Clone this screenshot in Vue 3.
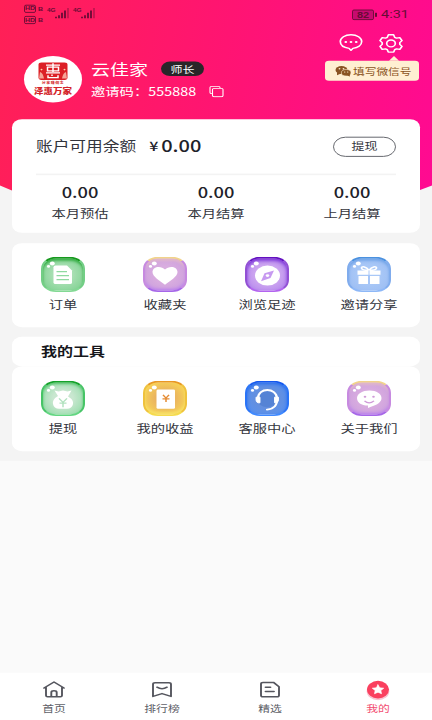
<script setup>
const stats = [
  { value: '0.00', label: '本月预估' },
  { value: '0.00', label: '本月结算' },
  { value: '0.00', label: '上月结算' },
]
const shortcuts = [
  { label: '订单', icon: 'order', tone: 'green' },
  { label: '收藏夹', icon: 'heart', tone: 'orchid' },
  { label: '浏览足迹', icon: 'compass', tone: 'violet' },
  { label: '邀请分享', icon: 'gift', tone: 'sky' },
]
const tools = [
  { label: '提现', icon: 'bag', tone: 'mint' },
  { label: '我的收益', icon: 'income', tone: 'amber' },
  { label: '客服中心', icon: 'headset', tone: 'blue' },
  { label: '关于我们', icon: 'smile', tone: 'orchid' },
]
const groups = [shortcuts, tools]
const tabs = [
  { label: '首页', icon: 'home' },
  { label: '排行榜', icon: 'rank' },
  { label: '精选', icon: 'pick' },
  { label: '我的', icon: 'mine', active: true },
]
</script>

<template>
  <div class="viewport">
    <div class="phone">
      <main class="page">
        <div class="hero"></div>
        <header class="status">
          <div class="hd"><span><b>HD</b><i>B</i></span><span><b>HD</b><i>B</i></span></div>
          <div v-for="n in 2" :key="n" class="signal">
            <em>4G</em>
            <svg width="14" height="13" viewBox="0 0 14 13"><path d="M1 11v2M4 9v4M7 6v7M10 3v10" /><path class="dim" d="M13 0v13" /></svg>
          </div>
          <div class="battery"><span>82</span></div>
          <time>4:31</time>
        </header>

        <section class="profile">
          <div class="avatar">
            <svg width="58" height="58" viewBox="0 0 58 58">
              <rect x="14.500" y="8" width="29" height="22" rx="3" fill="#dc2026" />
              <path d="M16 20q3 1 4 8h-5zM42 20q-3 1-4 8h5z" fill="#f5a497" />
              <circle cx="17.500" cy="17" r="1" fill="#ffd4a8" /><circle cx="40.500" cy="17" r="1" fill="#ffd4a8" />
              <path d="M22 11.500h14M29 9v11M23.500 14h11v4.500h-11zM22 21h14M24 24v3h10v-3M28 23v2" fill="none" stroke="#fff" stroke-width="1.500" />
            </svg>
            <small>分享赚佣金</small>
            <strong>泽惠万家</strong>
          </div>
          <div class="who">
            <div class="name">云佳家<span class="badge">师长</span></div>
            <div class="code">
              邀请码：<span>555888</span>
              <svg width="15" height="15" viewBox="0 0 15 15"><path d="M3 10H2.500Q1 10 1 8.500v-6Q1 1 2.500 1h7Q11 1 11 2.500V3" /><rect x="3.500" y="3.500" width="10.500" height="10.500" rx="1.500" /></svg>
            </div>
          </div>
          <div class="actions">
            <svg width="24" height="23" viewBox="0 0 24 23"><path d="M12 1.500c6 0 10.700 3.500 10.700 8.500 0 4.800-4 7.700-8.800 8.400L12 21l-1.900-2.600C5 17.700 1.300 14.800 1.300 10 1.300 5 6 1.500 12 1.500z" /><g class="dots"><circle cx="6.800" cy="10.500" r="1.400" /><circle cx="12" cy="10.500" r="1.400" /><circle cx="17.200" cy="10.500" r="1.400" /></g></svg>
            <svg width="24" height="24" viewBox="0 0 24 24"><path d="M9.400 1.500h5.200l1.100 3.200 1.800 1 3.300-.7 2.200 3.800-2.200 2.500v2.200l2.200 2.500-2.200 3.800-3.300-.7-1.800 1-1.100 3.200H9.400l-1.100-3.200-1.800-1-3.300.7L1 16l2.200-2.500v-2.200L1 8.800 3.200 5l3.300.7 1.800-1z" /><circle cx="12" cy="12.300" r="4.300" /></svg>
          </div>
          <div class="tip">
            <svg width="16" height="14" viewBox="0 0 16 14"><ellipse cx="6.500" cy="5.500" rx="6" ry="5" fill="#8a5323" /><path d="M2 8l0 4 4-2z" fill="#8a5323" /><ellipse cx="11.200" cy="9" rx="4.800" ry="4.100" fill="#8a5323" stroke="#ffefd2" stroke-width=".7" /><path d="M12 12l3 2-.4-4z" fill="#8a5323" /><g fill="#ffefd2"><circle cx="4.500" cy="4" r=".9" /><circle cx="8.500" cy="4" r=".9" /><circle cx="9.700" cy="8" r=".7" /><circle cx="12.700" cy="8" r=".7" /></g></svg>
            <span>填写微信号</span>
          </div>
        </section>

        <section class="card wallet">
          <div class="balance">
            <span>账户可用余额</span><i>¥</i><b>0.00</b>
            <button>提现</button>
          </div>
          <div class="stats">
            <div v-for="s in stats" :key="s.label"><b>{{ s.value }}</b><span>{{ s.label }}</span></div>
          </div>
        </section>

        <template v-for="(group, g) in groups" :key="g">
          <h2 v-if="g === 1" class="card heading">我的工具</h2>
          <section class="card grid" :class="{ tools: g === 1 }">
            <div v-for="item in group" :key="item.label" class="item">
              <div class="jelly" :class="item.tone">
                <svg width="44" height="44" viewBox="0 0 44 44">
                  <g fill="#fff"><circle cx="11.300" cy="8.500" r="2.500" /><circle cx="7.500" cy="12" r="1.600" /></g>
                  <g v-if="item.icon === 'order'"><path d="M14.500 11h11.500l5 6v15q0 2-2 2H14.500q-2 0-2-2V13q0-2 2-2z" fill="#fff" /><path d="M15.500 18.500h10.500M15.500 23.500h12.500M15.500 28.500h12.500" stroke="#8fd9a0" stroke-width="1.500" /></g>
                  <path v-else-if="item.icon === 'heart'" d="M22 35C17 30 9.500 25 9.500 19c0-7 8.500-8.500 12.500-3 4-5.500 12.500-4 12.500 3 0 6-7.500 11-12.500 16z" fill="#fff" />
                  <g v-else-if="item.icon === 'compass'"><circle cx="22.500" cy="23.500" r="12.500" fill="#fff" /><path d="M29 17l-3.500 9.500L16 30.500l3.500-10z" fill="#c79af0" /><circle cx="22.500" cy="23.500" r="1.800" fill="#fff" /></g>
                  <g v-else-if="item.icon === 'gift'"><path d="M10.500 17h23v5.500h-23zM11.500 24H21v10h-9.500zM23 24h9.500v10H23z" fill="#fff" /><path d="M22 17c-3-5-7-5.500-7.500-3 0 2 3 3 7.500 3 4.500 0 7.500-1 7.500-3-.5-2.500-4.500-2-7.500 3z" fill="none" stroke="#fff" stroke-width="1.800" /><path d="M22 17v17" stroke="#9fc2f8" /></g>
                  <g v-else-if="item.icon === 'bag'"><path d="M13.500 12l4 1.500 4.500-1.500 4.500 1.500 4-1.500-3.500 7.500c4 3 5.500 5.500 5 9.500-.4 4-3 6-6 6h-8c-3 0-5.600-2-6-6-.4-4 1-7 5-10z" fill="#fff" /><path d="M18 22l4 5 4-5M22 27v6M18.500 28h7" fill="none" stroke="#b3e2c0" stroke-width="1.500" /></g>
                  <g v-else-if="item.icon === 'income'"><rect x="13.500" y="11" width="18.500" height="24" rx="1.500" fill="#fff" /><path d="M20 17.500l3 4 3-4M23 21.500v5M19.500 22.500h7" fill="none" stroke="#e58b32" stroke-width="1.500" /></g>
                  <g v-else-if="item.icon === 'headset'"><circle cx="22" cy="23" r="10" fill="#4b7bd0" opacity=".6" /><path d="M13 22c0-14 18.500-14 19 0 .5 8-2 13-10 14" fill="none" stroke="#fff" stroke-width="2.200" stroke-linecap="round" /><path d="M11 20.500h4v7h-2q-2-1-2-3.500zM29.500 20.500h4v3.500q0 2.500-2 3.500h-2z" fill="#fff" stroke="#fff" stroke-linejoin="round" /></g>
                  <g v-else><path d="M22.500 12c7 0 12 4 12 9.500 0 6-5 8.500-10.500 11L21 34v-3c-7 0-11-4-11-9.500 0-5.500 5.500-9.500 12.500-9.500z" fill="#fff" /><path d="M17.500 25q4.500 5 9.500 0" fill="none" stroke="#d09ad8" stroke-width="1.500" /><g fill="#d09ad8"><circle cx="18" cy="20" r="1.300" /><circle cx="26.500" cy="20" r="1.300" /></g></g>
                </svg>
              </div>
              <span>{{ item.label }}</span>
            </div>
          </section>
        </template>
      </main>

      <nav>
        <div v-for="t in tabs" :key="t.label" :class="{ active: t.active }">
          <svg v-if="t.icon === 'home'" width="24" height="24" viewBox="0 0 24 24"><path d="M2 10L12 2.500 22 10M4 9v10.500q0 1.500 1.500 1.500h13q1.500 0 1.500-1.500V9M9.300 21v-5.500q0-2 2.700-2t2.700 2V21" /></svg>
          <svg v-else-if="t.icon === 'rank'" width="24" height="24" viewBox="0 0 24 24"><path d="M5 3.500h14Q21 3.500 21 5.500V20.500L12 17 3 20.500V5.500Q3 3.500 5 3.500zM7 9q5 4 10 0" /></svg>
          <svg v-else-if="t.icon === 'pick'" width="24" height="24" viewBox="0 0 24 24"><path d="M5 3h10.500L21 8.500V19q0 2-2 2H5q-2 0-2-2V5q0-2 2-2zM7.500 9h5M7.500 14.500H16" /></svg>
          <svg v-else width="24" height="26" viewBox="0 0 24 26"><circle cx="12" cy="14" r="11.300" fill="#f9c4d2" stroke="none" /><circle cx="12" cy="12" r="11" fill="#fa405f" stroke="none" /><path d="M12 6l1.700 3.800 4 .5-2.900 2.800.7 4-3.500-1.900-3.500 1.900.7-4-2.900-2.800 4-.5z" fill="#fff" stroke="#fff" stroke-width=".8" /></svg>
          <span>{{ t.label }}</span>
        </div>
      </nav>
    </div>
  </div>
</template>

<style>
body { margin: 0; overflow: hidden; }
</style>

<style scoped>
* { box-sizing: border-box; }
.viewport { width: 432px; height: 720px; overflow: hidden; }
/* The screen is designed at 432x900 and condensed vertically to the viewport. */
.phone {
  width: 432px; height: 900px; transform: scaleY(.8); transform-origin: 0 0;
  display: flex; flex-direction: column; background: #fafafa; color: #33353d;
  font-family: "Noto Sans CJK SC", "Noto Sans", sans-serif; font-size: 14.3px; line-height: 20px;
}
svg { display: block; flex: none; }
.page { position: relative; height: 576px; background: #f4f4f4; padding: 0 12px; }
.hero {
  position: absolute; left: 0; top: 0; width: 432px; height: 260px;
  background: linear-gradient(98deg, #ff2056 0%, #ff1472 50%, #ff0a92 100%);
  clip-path: polygon(0 0, 100% 0, 100% 232px, 96% 240px, 80% 260px, 20% 260px, 4% 241px, 0 232px);
}
.status { position: relative; height: 70px; padding: 5px 13px 0 12px; display: flex; align-items: flex-start; color: #670c35; }
.hd { display: flex; flex-direction: column; gap: 4px; width: 23px; padding-top: 1px; }
.hd span { display: flex; align-items: center; gap: 2px; height: 10px; }
.hd b { font: bold 7px/8px "Liberation Sans", sans-serif; border: 1px solid #670c35; border-radius: 2px; padding: 0; width: 12px; text-align: center; }
.hd i { font: bold 7px/8px "Liberation Sans", sans-serif; margin-top: 2px; }
.signal { display: flex; width: 26px; padding-top: 5px; }
.signal em { font: bold 6.500px/8px "Liberation Sans", sans-serif; width: 8px; margin-top: -1px; }
.signal svg { stroke: #670c35; stroke-width: 1.800; fill: none; }
.signal .dim { opacity: .4; }
.battery { margin: 7px 0 0 auto; width: 22px; height: 13px; border: 1px solid #670c35; border-radius: 2px; display: flex; justify-content: center; align-items: center; font: bold 11px/11px "Liberation Sans", sans-serif; position: relative; background: #c80a70; }
.battery::after { content: ""; position: absolute; right: -4px; top: 3px; width: 2px; height: 5px; background: #670c35; }
time { font: 14.500px/16px Roboto, sans-serif; margin: 5px 0 0 7px; width: 26px; }
.profile { position: relative; height: 79px; padding-left: 12px; display: flex; color: #fff; }
.avatar { width: 58px; height: 58px; border-radius: 50%; background: #fff; color: #d3242a; display: flex; flex-direction: column; align-items: center; overflow: hidden; }
.avatar svg { margin-bottom: -27px; }
.avatar small { font-size: 4px; line-height: 5px; font-weight: 700; letter-spacing: .5px; }
.avatar strong { font: 900 9.500px/14px "Noto Sans CJK SC", sans-serif; white-space: nowrap; margin-top: 1px; }
.who { padding: 3px 0 0 9px; }
.name { font-size: 19px; line-height: 26px; height: 30px; display: flex; align-items: center; padding-bottom: 4px; }
.badge { margin-left: 13px; background: #292629; width: 43px; height: 18px; border-radius: 9px; font-size: 12px; line-height: 17px; text-align: center; }
.code { display: flex; align-items: center; height: 22px; white-space: nowrap; }
.code span { letter-spacing: .1px; }
.code svg { margin-left: 13px; fill: none; stroke: #fff; stroke-width: 1.100; }
.actions { position: absolute; right: 17px; top: -28px; display: flex; gap: 16px; fill: none; stroke: #fff; stroke-width: 1.700; stroke-linejoin: round; }
.dots { fill: #fff; stroke: none; }
.tip { position: absolute; right: 1px; top: 6px; width: 94px; height: 25px; border-radius: 4px; background: #ffefd2; color: #8a5323; font-size: 11.700px; display: flex; align-items: center; gap: 2px; padding-left: 10px; white-space: nowrap; }
.tip::before { content: ""; position: absolute; left: 64px; top: -6px; border: 5px solid transparent; border-top: 0; border-bottom: 6px solid #ffefd2; }
.card { position: relative; background: #fff; border-radius: 10px; margin: 0; }
.wallet { height: 142px; padding: 0 24px; }
.balance { height: 70px; border-bottom: 2px solid #f3f3f3; display: flex; align-items: center; white-space: nowrap; font-size: 16.700px; }
.balance span, .balance i, .balance b { position: relative; top: -1px; }
.balance i { font-style: normal; font-weight: 500; font-size: 16px; margin-left: 13px; width: 12px; color: #202129; }
.balance b { font-size: 20px; font-weight: 500; color: #202129; }
button { margin-left: auto; width: 63px; height: 25px; border: 1px solid #55575e; border-radius: 13px; background: none; padding: 0; color: inherit; font: 13px/20px "Noto Sans CJK SC", sans-serif; }
.stats { display: flex; margin: 0 -24px; padding-top: 11px; }
.stats div { flex: 1; display: flex; flex-direction: column; align-items: center; gap: 6px; }
.stats b { font-size: 18.300px; font-weight: 500; color: #202129; }
.grid { display: grid; grid-template-columns: repeat(4, 102px); height: 105px; margin-top: 13px; padding-top: 17px; }
.item { display: flex; flex-direction: column; align-items: center; gap: 5px; }
.heading { height: 37px; margin-top: 12px; padding-left: 29px; font-size: 16px; line-height: 34px; font-weight: 700; color: #16171b; }
.tools { margin-top: 0; height: 106px; padding-top: 18px; }
.jelly { width: 44px; height: 44px; border-radius: 15px; border: 2px solid; }
.jelly svg { margin: -2px; }
.green { background: radial-gradient(#a8dfb3 35%, #78cf8b); border-color: #16991d #72ce85 #83d994; box-shadow: inset 0 3px 3px #39ae47; }
.mint { background: radial-gradient(#c9e7d0 35%, #8cdaa3); border-color: #15a22b #46c466 #62d681; box-shadow: inset 0 2px 3px #54c46b; }
.orchid { background: radial-gradient(#d9addf 35%, #c99cde); border-color: #f1d38b #c78ae0 #a667e8; box-shadow: inset 0 -2px 3px #bb82ed, inset 0 3px 3px #e2b9c8; }
.violet { background: radial-gradient(#d0aaf0 35%, #b181ed); border-color: #6310c0 #9250d4 #b364ef; box-shadow: inset 0 3px 4px #7d35d8; }
.sky { background: radial-gradient(#a9c8f7 35%, #9bbcf2); border-color: #4b91df #80aced #8eb8f7; box-shadow: inset 0 3px 3px #72a5e8; }
.amber { background: radial-gradient(#e7ad61 25%, #f6cf57 75%); border-color: #e99824 #efc23d #f5db4d; box-shadow: inset 0 -3px 3px #f7e066; }
.blue { background: radial-gradient(#658fdc 35%, #5592f5); border-color: #1458ee #2a74f7 #3f89ff; box-shadow: inset 0 2px 4px #276bea; }
nav { margin-top: auto; height: 59px; background: #fff; display: grid; grid-template-columns: repeat(4, 108px); color: #606168; font-size: 11.800px; line-height: 16px; }
nav div { display: flex; flex-direction: column; align-items: center; justify-content: space-between; padding: 9px 0 7px; }
nav svg { fill: none; stroke: #55565e; stroke-width: 1.900; stroke-linejoin: round; stroke-linecap: round; }
.active { color: #f34c70; }
</style>
